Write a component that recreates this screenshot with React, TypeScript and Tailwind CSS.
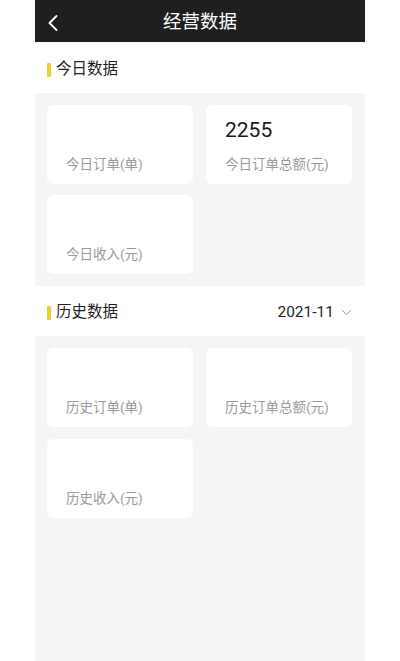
import { ChevronDown, ChevronLeft } from "lucide-react"

interface StatCardProps {
  label: string
  value?: string
}

function StatCard({ label, value }: StatCardProps) {
  return (
    <div className="h-[79px] rounded-[6px] bg-white pl-[19px] pt-[13px] pb-[12px] flex flex-col">
      <div className="h-[24px] text-[21px] leading-[24px] text-[#1a1a1a]">{value}</div>
      <div className="mt-auto text-[13.5px] leading-[16px] text-[#9a9a9a]">{label}</div>
    </div>
  )
}

function SectionTitle({ title, right }: { title: string; right?: React.ReactNode }) {
  return (
    <div className="h-[50px] bg-white flex items-center pt-[3px] pl-[12px] pr-[10px]">
      <span className="w-[4px] h-[14px] rounded-[1px] bg-[#f0cf2c]" />
      <span className="ml-[5px] text-[15.5px] text-[#1f1f1f]">{title}</span>
      {right && <div className="ml-auto">{right}</div>}
    </div>
  )
}

export default function App() {
  return (
    <div
      className="min-h-[661px] bg-white flex justify-center"
      style={{ fontFamily: "Roboto, 'Noto Sans CJK SC', sans-serif" }}
    >
      <div className="w-[330px] min-h-[661px] bg-[#f5f5f5]">
        {/* Header */}
        <div className="relative h-[42px] bg-[#1f1f1f] flex items-center justify-center pt-[4px]">
          <ChevronLeft
            className="absolute left-[4px] top-[9px] text-white"
            size={28}
            strokeWidth={1.6}
          />
          <span className="text-[18.5px] text-white">经营数据</span>
        </div>

        {/* Today */}
        <div className="h-[1px] bg-white" />
        <SectionTitle title="今日数据" />
        <div className="grid grid-cols-2 gap-x-[13px] gap-y-[11px] p-[12px] pr-[13px]">
          <StatCard label="今日订单(单)" />
          <StatCard label="今日订单总额(元)" value="2255" />
          <StatCard label="今日收入(元)" />
        </div>

        {/* History */}
        <SectionTitle
          title="历史数据"
          right={
            <div className="flex items-center gap-[4px]">
              <span className="text-[15.5px] text-[#1f1f1f]">2021-11</span>
              <ChevronDown size={17} strokeWidth={1.4} className="text-[#999999]" />
            </div>
          }
        />
        <div className="grid grid-cols-2 gap-x-[13px] gap-y-[12px] p-[12px] pr-[13px]">
          <StatCard label="历史订单(单)" />
          <StatCard label="历史订单总额(元)" />
          <StatCard label="历史收入(元)" />
        </div>
      </div>
    </div>
  )
}
